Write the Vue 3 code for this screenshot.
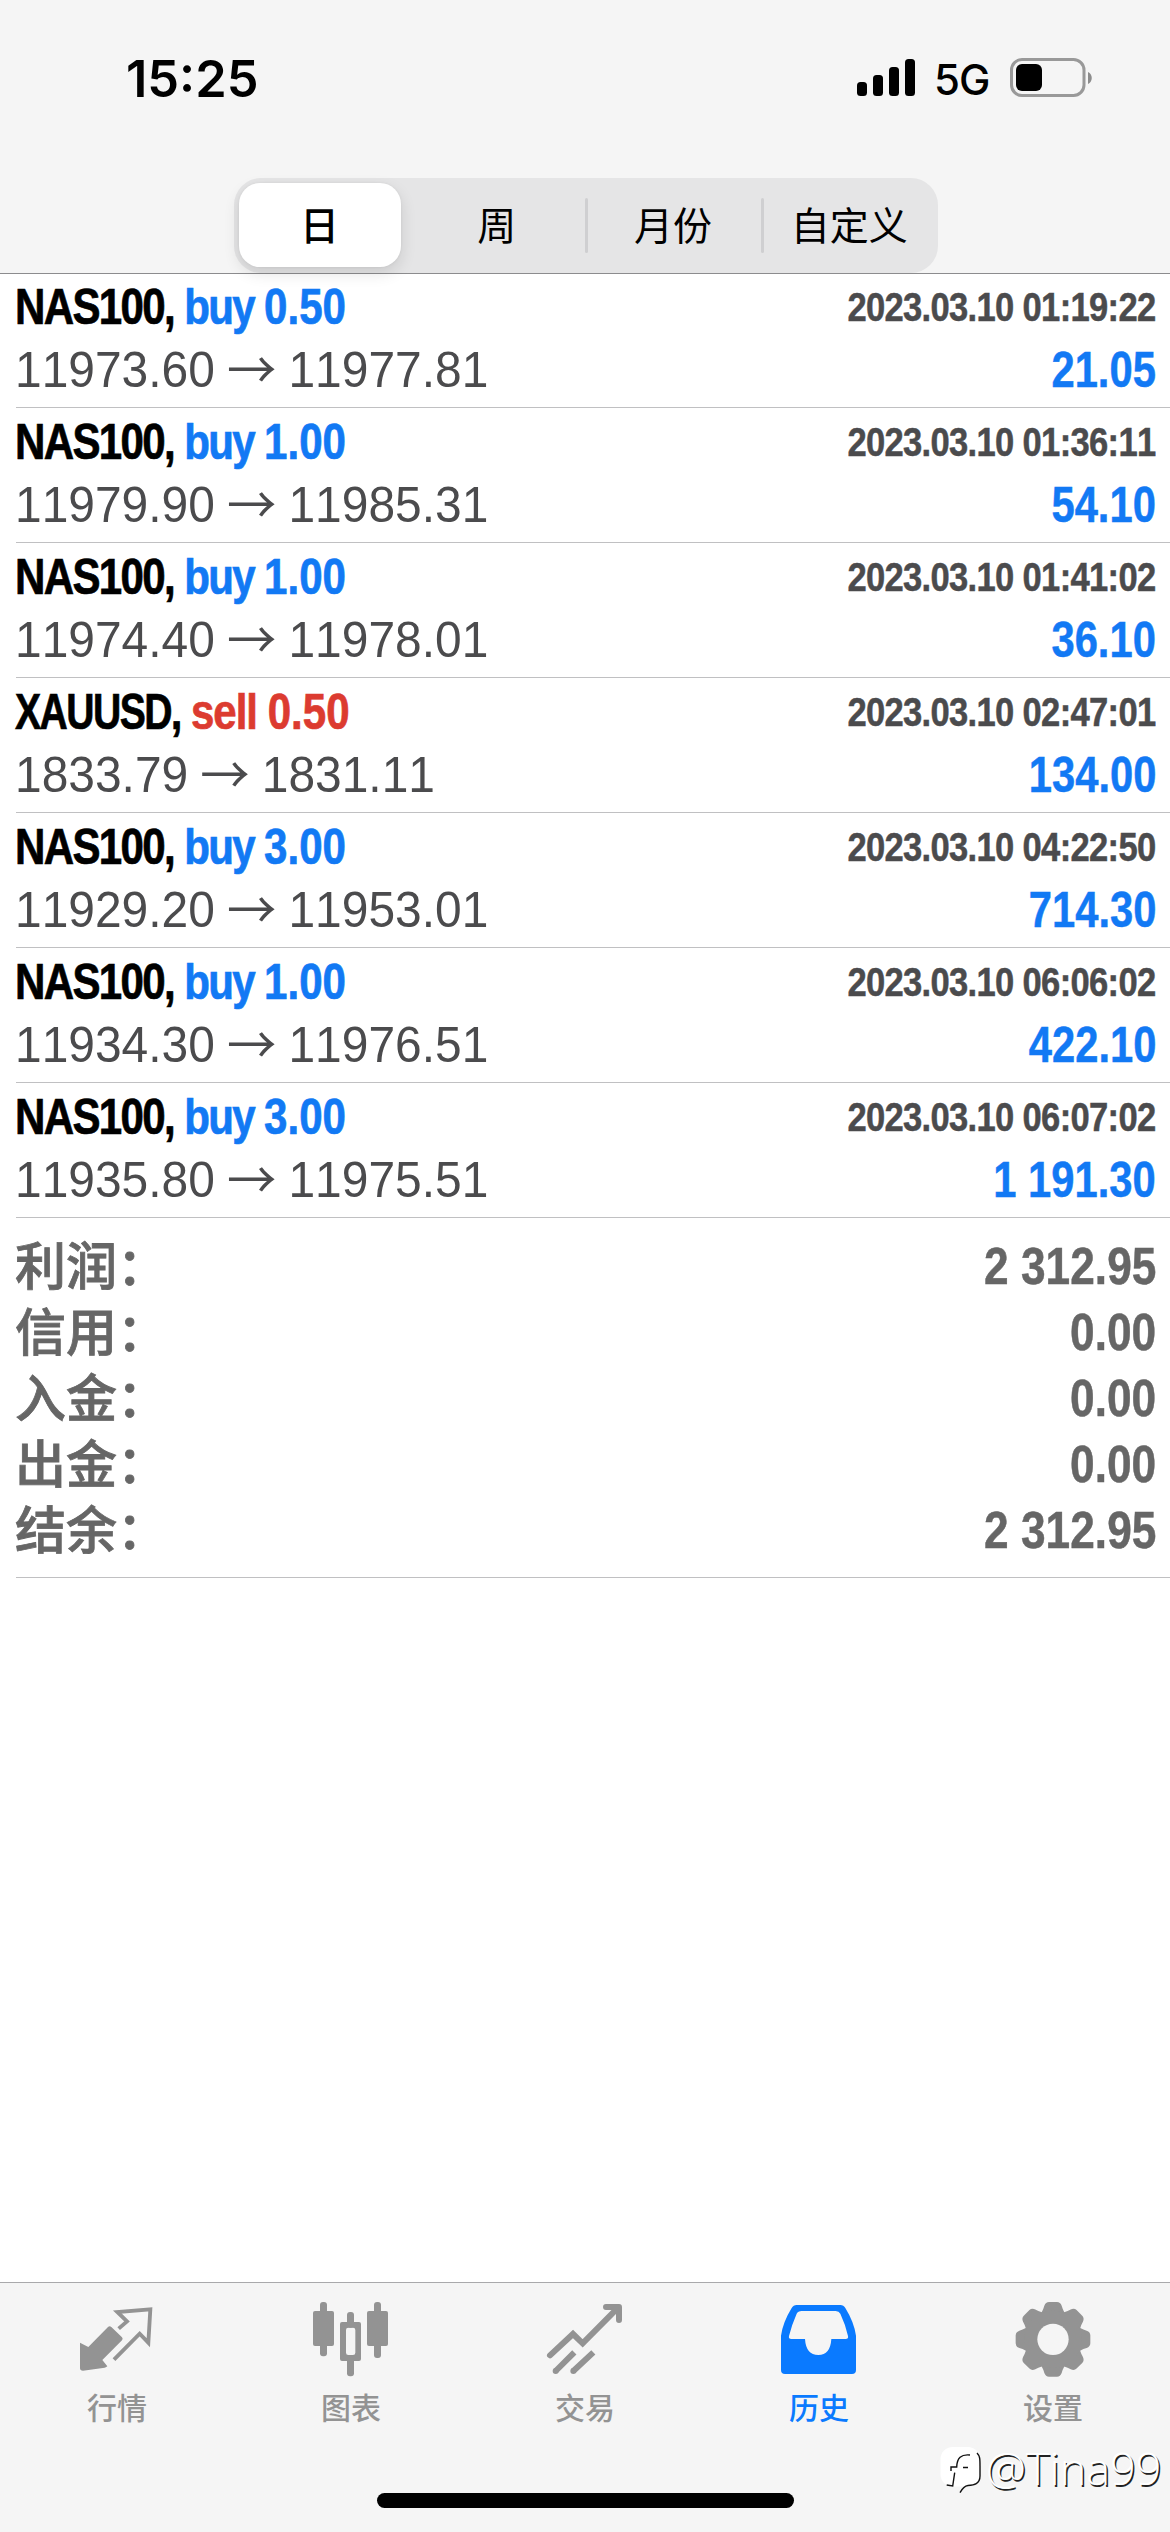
<script setup>
const periods = ['日', '周', '月份', '自定义']

const deals = [
  { symbol: 'NAS100', side: 'buy', volume: '0.50', open: '11973.60', close: '11977.81', time: '2023.03.10 01:19:22', profit: '21.05' },
  { symbol: 'NAS100', side: 'buy', volume: '1.00', open: '11979.90', close: '11985.31', time: '2023.03.10 01:36:11', profit: '54.10' },
  { symbol: 'NAS100', side: 'buy', volume: '1.00', open: '11974.40', close: '11978.01', time: '2023.03.10 01:41:02', profit: '36.10' },
  { symbol: 'XAUUSD', side: 'sell', volume: '0.50', open: '1833.79', close: '1831.11', time: '2023.03.10 02:47:01', profit: '134.00' },
  { symbol: 'NAS100', side: 'buy', volume: '3.00', open: '11929.20', close: '11953.01', time: '2023.03.10 04:22:50', profit: '714.30' },
  { symbol: 'NAS100', side: 'buy', volume: '1.00', open: '11934.30', close: '11976.51', time: '2023.03.10 06:06:02', profit: '422.10' },
  { symbol: 'NAS100', side: 'buy', volume: '3.00', open: '11935.80', close: '11975.51', time: '2023.03.10 06:07:02', profit: '1 191.30' },
]

const totals = [
  { label: '利润：', value: '2 312.95' },
  { label: '信用：', value: '0.00' },
  { label: '入金：', value: '0.00' },
  { label: '出金：', value: '0.00' },
  { label: '结余：', value: '2 312.95' },
]
</script>

<template>
  <div class="screen">
    <header class="header">
      <div class="status">
        <span class="clock">15:25</span>
        <div class="indicators">
          <svg class="signal" width="58" height="38" viewBox="0 0 58 38">
            <rect x="0" y="23" width="10" height="14" rx="3.5" />
            <rect x="16" y="16" width="10" height="21" rx="3.5" />
            <rect x="32" y="8" width="10" height="29" rx="3.5" />
            <rect x="48" y="0" width="10" height="37" rx="3.5" />
          </svg>
          <span class="network">5G</span>
          <svg class="battery" width="84" height="40" viewBox="0 0 84 40">
            <rect x="1.5" y="1.5" width="72.5" height="36" rx="10.5" fill="none" stroke="#999" stroke-width="3" />
            <rect x="6" y="6" width="26" height="27" rx="6" fill="#000" />
            <path d="M78 14c5 2 5 10 0 12z" fill="#8c8c8c" />
          </svg>
        </div>
      </div>
      <div class="segments">
        <div v-for="(p, i) in periods" :key="p" class="segment" :class="{ active: i === 0, divided: i > 1 }">{{ p }}</div>
      </div>
    </header>

    <main class="history">
      <article v-for="d in deals" :key="d.time" class="deal">
        <div class="line">
          <div class="title"><span class="tight"><span :class="{ narrow: d.symbol === 'XAUUSD' }">{{ d.symbol }}</span>{{ ', ' }}</span><span :class="d.side"><span class="side">{{ d.side + ' ' }}</span>{{ d.volume }}</span></div>
          <div class="time">{{ d.time }}</div>
        </div>
        <div class="line second">
          <div class="prices">{{ d.open }}<span class="arrow">→</span>{{ d.close }}</div>
          <div class="profit">{{ d.profit }}</div>
        </div>
      </article>

      <section class="totals">
        <div v-for="t in totals" :key="t.label" class="total">
          <span class="total-label">{{ t.label }}</span>
          <span class="total-value">{{ t.value }}</span>
        </div>
      </section>
    </main>

    <footer class="footer">
      <nav class="tabs">
        <a class="tab">
          <svg viewBox="105 90 252 252">
            <path d="M120 218L145 231L204 171Q209 166 214 171L246 202Q250 207 246 211L187 270L202 289Q200 292 194 293L129 302Q120 302 120 295z" fill="currentColor" />
            <path d="M236 176L261 154L232 126L331 118L325 218L299 191L222 269" fill="none" stroke="currentColor" stroke-width="11.5" />
          </svg>
          <span>行情</span>
        </a>
        <a class="tab">
          <svg viewBox="807 90 252 252" fill="currentColor">
            <rect x="840" y="96" width="21" height="163" rx="9" />
            <rect x="819" y="123" width="63" height="105" rx="6" />
            <rect x="1002" y="96" width="21" height="168" rx="9" />
            <rect x="981" y="123" width="63" height="105" rx="6" />
            <rect x="921" y="126" width="21" height="47" rx="9" />
            <rect x="921" y="255" width="21" height="64" rx="9" />
            <path fill-rule="evenodd" d="M906 156h51q6 0 6 6v105q0 6-6 6h-51q-6 0-6-6V162q0-6 6-6zm19 17q-7 0-7 7v68q0 7 7 7h14q7 0 7-7v-68q0-7-7-7z" />
          </svg>
          <span>图表</span>
        </a>
        <a class="tab">
          <svg viewBox="129 90 252 252" fill="none" stroke="currentColor" stroke-width="18">
            <path d="M150 256L219 192L248 220L352 115" stroke-linecap="round" stroke-linejoin="miter" />
            <path d="M318 111H357V150" stroke-linecap="round" stroke-linejoin="round" />
            <path d="M167 303L223 247M220 303L280 247" />
            <path d="M167 303h.1M220 303h.1" stroke-linecap="round" />
          </svg>
          <span>交易</span>
        </a>
        <a class="tab selected">
          <svg viewBox="831 90 252 252" fill="currentColor">
            <path fill-rule="evenodd" d="M890 105H1021Q1031 105 1036 114Q1062 156 1068 197V300Q1068 312 1056 312H855Q843 312 843 300V197Q849 156 875 114Q880 105 890 105zM905 123Q894 123 890 131Q875 165 867 198Q865 207 874 207H915Q918 255 955 255Q991 255 994 207H1037Q1046 207 1044 198Q1037 165 1021 131Q1017 123 1007 123z" />
          </svg>
          <span>历史</span>
        </a>
        <a class="tab">
          <svg viewBox="-126 -118 252 252">
            <g fill="currentColor">
              <path v-for="a in 8" :key="a" :transform="`rotate(${a * 45})`" d="M-48 -60Q-31 -82 -26 -101Q-22 -112 -12 -112H12Q22 -112 26 -101Q31 -82 48 -60L0 0z" />
              <circle r="86" />
            </g>
            <circle r="47" fill="#f5f5f5" />
          </svg>
          <span>设置</span>
        </a>
      </nav>
      <div class="home-bar"></div>
      <div class="watermark">
        <svg width="42" height="50" viewBox="0 0 42 50">
          <rect x="0.5" y="1" width="39.5" height="39.5" rx="12" fill="#fff" />
          <g fill="none" stroke="#111" stroke-width="1.4">
            <path d="M37 7C40 10 40 13 40 20V30C40 38 34 39 28 39.5C24 40 22 43 20 46.7" />
            <path d="M11 25V21H16.7C17 12 21 8 30 9M23 21.5H28M14.7 26.7L12.7 40L6.7 39" />
          </g>
        </svg>
        <span>@Tina99</span>
      </div>
    </footer>
  </div>
</template>

<style>
body {
  margin: 0;
}
</style>

<style scoped>
.screen {
  display: flex;
  flex-direction: column;
  width: 1170px;
  height: 2532px;
  overflow: hidden;
  background: #fff;
  color: #000;
  font-family: "Liberation Sans", "Noto Sans CJK SC", sans-serif;
}

.header {
  position: relative;
  z-index: 1;
  display: flex;
  flex-direction: column;
  align-items: center;
  height: 273px;
  background: #f5f5f5;
  box-shadow: 0 1px 0 #8c8c8e;
}

.status {
  display: flex;
  justify-content: space-between;
  align-items: center;
  align-self: stretch;
  height: 156px;
  margin-bottom: 22px;
  padding: 0 76px 0 126px;
  font-family: Inter, sans-serif;
}

.clock {
  font-size: 50.5px;
  font-weight: 600;
}

.indicators {
  display: flex;
  align-items: center;
}

.network {
  width: 56px;
  margin: 3px 20px 0 19px;
  font-size: 42px;
  font-weight: 500;
  letter-spacing: -1px;
}

.segments {
  display: flex;
  box-sizing: border-box;
  width: 704px;
  height: 95px;
  margin-left: 1px;
  padding: 5px 0 5px 5px;
  border-radius: 27px;
  background: #e5e5e6;
}

.segment {
  display: flex;
  flex: 1;
  align-items: center;
  justify-content: center;
  position: relative;
  box-sizing: border-box;
  height: 84px;
  padding-bottom: 4px;
  font-family: "Noto Sans CJK SC", sans-serif;
  font-size: 39px;
}

.segment.active {
  flex: none;
  width: 162px;
  margin-right: 8px;
  border-radius: 21px;
  background: #fff;
  box-shadow: 0 6px 16px rgba(0, 0, 0, 0.12), 0 0 3px rgba(0, 0, 0, 0.06);
  font-weight: 500;
}

.segment.divided::before {
  content: "";
  position: absolute;
  left: 0;
  top: 15px;
  width: 3px;
  height: 55px;
  border-radius: 2px;
  background: #cfcfd1;
}

.history {
  flex: 1;
}

.deal {
  box-sizing: border-box;
  height: 135px;
  margin-left: 16px;
  padding: 6px 14px 0 0;
  border-bottom: 1px solid #c0c0c2;
}

.line {
  display: flex;
  justify-content: space-between;
  margin-left: -1.5px;
  line-height: 56px;
  white-space: pre;
}

.second {
  line-height: 70px;
}

.title,
.prices {
  transform-origin: left;
  font-size: 49.5px;
}

.title {
  transform: scaleX(0.85);
  font-weight: 700;
  -webkit-text-stroke: 0.7px currentColor;
}

.tight,
.side {
  letter-spacing: -1.95px;
}

.sell .side {
  letter-spacing: -1.2px;
}

.narrow {
  display: inline-block;
  margin-right: -14px;
  transform: scaleX(0.93);
  transform-origin: left;
}

.buy {
  color: #1279f4;
}

.sell {
  color: #dc3b30;
}

.time,
.profit,
.total-value {
  transform: scaleX(0.843);
  transform-origin: right;
  font-weight: 700;
  font-kerning: none;
  -webkit-text-stroke: 0.5px currentColor;
}

.time {
  color: #4b4b4d;
  font-size: 41px;
  letter-spacing: -0.8px;
}

.profit {
  color: #1279f4;
  font-size: 49.5px;
}

.prices {
  transform: scaleX(0.968);
  color: #4b4b4d;
  font-kerning: none;
}

.arrow {
  display: inline-block;
  position: relative;
  top: 2px;
  width: 76px;
  font-family: "Noto Sans CJK SC", sans-serif;
  font-size: 51px;
  line-height: 56px;
  text-align: center;
}

.totals {
  box-sizing: border-box;
  height: 360px;
  margin-left: 16px;
  padding: 15px 14px 0 0;
  border-bottom: 1px solid #c0c0c2;
  color: #666;
}

.total {
  display: flex;
  justify-content: space-between;
  height: 66px;
  line-height: 66px;
}

.total-label {
  margin: 2px 0 0 -1px;
  font-size: 51px;
  font-weight: 500;
  -webkit-text-stroke: 0.8px currentColor;
}

.total-value {
  font-size: 52.5px;
}

.footer {
  position: relative;
  display: flex;
  flex-direction: column;
  align-items: center;
  height: 249px;
  border-top: 1px solid #a9a9ab;
  background: #f5f5f5;
}

.tabs {
  display: flex;
  align-self: stretch;
  height: 210px;
}

.tab {
  display: flex;
  flex: 1;
  flex-direction: column;
  align-items: center;
  padding-top: 17px;
  color: #939393;
  font-family: "Noto Sans CJK SC", sans-serif;
  font-size: 30px;
  font-weight: 500;
  line-height: 44px;
}

.tab svg {
  width: 84px;
  height: 84px;
}

.tab.selected {
  color: #0a7aff;
}

.home-bar {
  width: 417px;
  height: 15px;
  border-radius: 8px;
  background: #000;
}

.watermark {
  position: absolute;
  left: 940px;
  top: 163px;
  display: flex;
  gap: 4px;
  color: #fff;
  font-family: "Open Sans", sans-serif;
  font-size: 45px;
  font-weight: 300;
  line-height: 44px;
  text-shadow: 1.5px 1.5px 0 #222;
}
</style>
